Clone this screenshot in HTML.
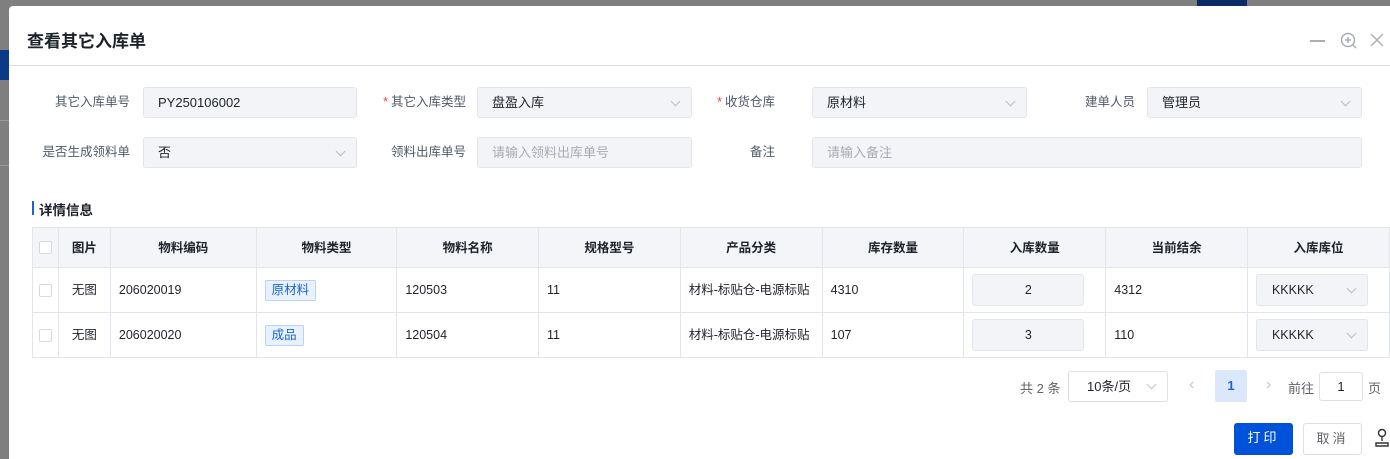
<!DOCTYPE html>
<html><head><meta charset="utf-8"><style>
*{box-sizing:border-box;margin:0;padding:0}
html,body{width:1390px;height:459px;overflow:hidden}
body{background:#7f7f7f;font-family:"Liberation Sans","Noto Sans CJK SC",sans-serif;font-size:13px;color:#1f2329;position:relative}
.abs{position:absolute}
.dlg{position:absolute;left:9px;top:6px;width:1381px;height:453px;background:#fff;border-radius:4px 0 0 0}
.title{position:absolute;left:27px;top:27px;font-size:17px;font-weight:bold;color:#1d2129}
.hr{position:absolute;left:9px;top:65px;width:1381px;height:1px;background:#e0e0e0}
.lbl{position:absolute;font-size:12.5px;color:#4e5969;text-align:right;line-height:31px}
.lbl .s{color:#f53f3f;margin-right:3px}
.inp{position:absolute;height:31px;background:#f3f4f8;border:1px solid #e2e5ec;border-radius:3px;line-height:29px;padding-left:14px;font-size:13px;color:#1d2129}
.inp.ph{color:#a8abb2}
.arr{position:absolute;right:12px;top:10px;width:7px;height:7px;border-right:1px solid #b8bcc4;border-bottom:1px solid #b8bcc4;transform:rotate(45deg)}
table{position:absolute;left:32px;top:227px;border-collapse:collapse;table-layout:fixed}
td,th{border:1px solid #e1e6ee;font-size:12.5px;height:45px;padding:0 8px;white-space:nowrap;overflow:hidden;vertical-align:middle;line-height:16px}
th{background:#f3f5f9;height:40px;font-weight:bold;text-align:center;color:#1d2129}
.cb{width:13px;height:13px;border:1px solid #d6dae0;border-radius:2px;background:#fff;margin:auto}
.tag{display:inline-block;border:1px solid #b8d3f8;background:#e8f1fd;color:#1764d8;padding:0 6px;line-height:19px;border-radius:2px;font-size:12.5px}
.qty{width:112px;height:32px;background:#f3f4f8;border:1px solid #e2e5ec;border-radius:3px;text-align:center;line-height:30px}
.loc{position:relative;width:112px;height:32px;background:#f3f4f8;border:1px solid #e2e5ec;border-radius:3px;line-height:30px;padding-left:15px}
.btn{position:absolute;height:32px;border-radius:3px;line-height:30px;text-align:center;font-size:13px;letter-spacing:3px}
</style></head><body>
<div class="abs" style="left:0;top:50px;width:9px;height:30px;background:#0b3a86"></div>
<div class="abs" style="left:0;top:120px;width:9px;height:1px;background:#999"></div>
<div class="abs" style="left:0;top:165px;width:9px;height:1px;background:#999"></div>
<div class="abs" style="left:1197px;top:0;width:50px;height:6px;background:#0b2a66"></div>
<div class="dlg"></div>
<div class="title">查看其它入库单</div>
<div class="abs" style="left:1310px;top:40px;width:15px;height:1.5px;background:#a9adb5"></div>
<svg class="abs" style="left:1339px;top:31px" width="20" height="20" viewBox="0 0 20 20" fill="none" stroke="#a9adb5" stroke-width="1.5"><circle cx="9" cy="9" r="6.5"/><path d="M9 6v6M6 9h6M14 14l3 3"/></svg>
<svg class="abs" style="left:1370px;top:33px" width="14" height="14" viewBox="0 0 14 14" stroke="#a9adb5" stroke-width="1.4"><path d="M1 1l12 12M13 1L1 13"/></svg>
<div class="hr"></div>

<div class="lbl" style="left:30px;top:87px;width:100px">其它入库单号</div>
<div class="inp" style="left:143px;top:87px;width:214px">PY250106002</div>
<div class="lbl" style="left:360px;top:87px;width:106px"><span class="s">*</span>其它入库类型</div>
<div class="inp" style="left:477px;top:87px;width:215px">盘盈入库<i class="arr"></i></div>
<div class="lbl" style="left:700px;top:87px;width:75px"><span class="s">*</span>收货仓库</div>
<div class="inp" style="left:812px;top:87px;width:215px">原材料<i class="arr"></i></div>
<div class="lbl" style="left:1050px;top:87px;width:85px">建单人员</div>
<div class="inp" style="left:1147px;top:87px;width:215px">管理员<i class="arr"></i></div>

<div class="lbl" style="left:20px;top:137px;width:110px">是否生成领料单</div>
<div class="inp" style="left:143px;top:137px;width:214px">否<i class="arr"></i></div>
<div class="lbl" style="left:360px;top:137px;width:106px">领料出库单号</div>
<div class="inp ph" style="left:477px;top:137px;width:215px">请输入领料出库单号</div>
<div class="lbl" style="left:700px;top:137px;width:75px">备注</div>
<div class="inp ph" style="left:812px;top:137px;width:550px">请输入备注</div>

<div class="abs" style="left:32px;top:201px;width:2px;height:14px;background:#1764d8"></div>
<div class="abs" style="left:39px;top:199px;font-size:13.5px;font-weight:bold;color:#1d2129">详情信息</div>

<table>
<colgroup><col style="width:26px"><col style="width:52px"><col style="width:146px"><col style="width:141px"><col style="width:142px"><col style="width:142px"><col style="width:142px"><col style="width:142px"><col style="width:142px"><col style="width:142px"><col style="width:142px"></colgroup>
<tr><th style="padding:0"><div class="cb"></div></th><th>图片</th><th>物料编码</th><th>物料类型</th><th>物料名称</th><th>规格型号</th><th>产品分类</th><th>库存数量</th><th>入库数量</th><th>当前结余</th><th>入库库位</th></tr>
<tr><td style="padding:0"><div class="cb"></div></td><td style="text-align:center">无图</td><td>206020019</td><td><span class="tag">原材料</span></td><td>120503</td><td>11</td><td>材料-标贴仓-电源标贴</td><td>4310</td><td><div class="qty">2</div></td><td>4312</td><td><div class="loc">KKKKK<i class="arr"></i></div></td></tr>
<tr><td style="padding:0"><div class="cb"></div></td><td style="text-align:center">无图</td><td>206020020</td><td><span class="tag">成品</span></td><td>120504</td><td>11</td><td>材料-标贴仓-电源标贴</td><td>107</td><td><div class="qty">3</div></td><td>110</td><td><div class="loc">KKKKK<i class="arr"></i></div></td></tr>
</table>

<div class="abs" style="left:1020px;top:378px;color:#606266">共 2 条</div>
<div class="abs" style="left:1068px;top:371px;width:100px;height:31px;border:1px solid #dcdfe6;border-radius:3px;line-height:29px;padding-left:18px">10条/页<i class="arr" style="top:9px;border-color:#c0c4cc"></i></div>
<div class="abs" style="left:1189px;top:376px;color:#c0c4cc;font-size:16px">‹</div>
<div class="abs" style="left:1215px;top:370px;width:32px;height:32px;background:#dbe8fc;border-radius:2px;color:#1764d8;font-weight:bold;text-align:center;line-height:32px">1</div>
<div class="abs" style="left:1266px;top:376px;color:#c0c4cc;font-size:16px">›</div>
<div class="abs" style="left:1288px;top:378px;color:#606266">前往</div>
<div class="abs" style="left:1319px;top:372px;width:44px;height:29px;border:1px solid #dcdfe6;border-radius:3px;text-align:center;line-height:27px">1</div>
<div class="abs" style="left:1368px;top:378px;color:#606266">页</div>

<div class="btn" style="left:1234px;top:423px;width:59px;background:#0052d9;color:#fff">打印</div>
<div class="btn" style="left:1303px;top:423px;width:59px;border:1px solid #dcdfe6;color:#606266;background:#fff">取消</div>
<svg class="abs" style="left:1374px;top:428px" width="16" height="20" viewBox="0 0 16 20" fill="none" stroke="#333" stroke-width="1.4"><circle cx="8" cy="5" r="3.5"/><path d="M8 9v4M2 15h12v3H2z"/></svg>
</body></html>
